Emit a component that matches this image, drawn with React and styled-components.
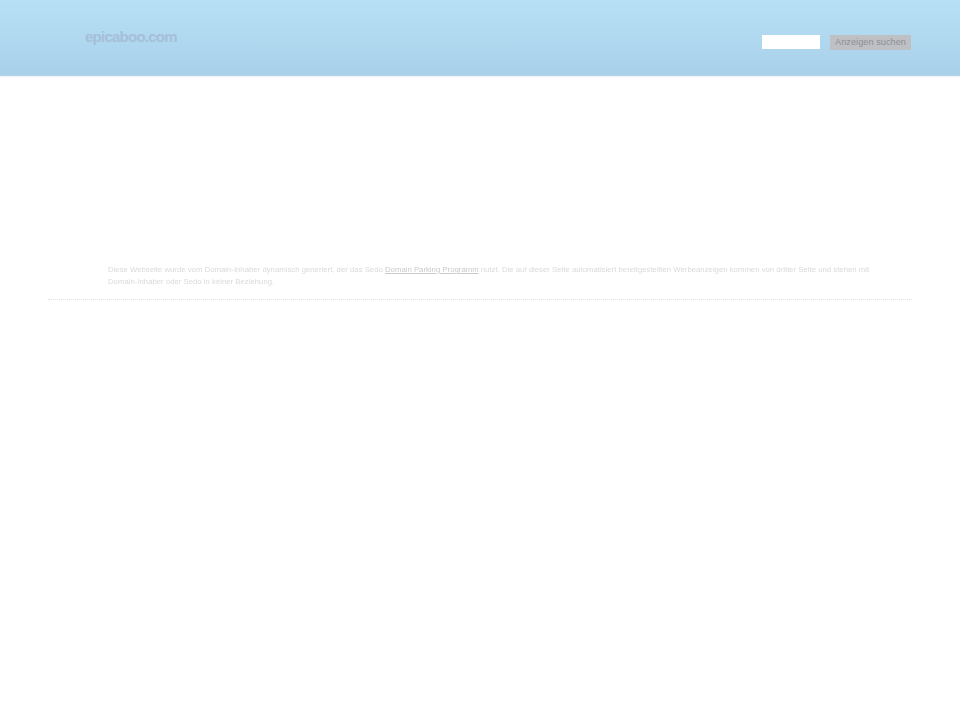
import React from 'react';
import styled, { createGlobalStyle } from 'styled-components';

const Global = createGlobalStyle`
  html, body { margin: 0; padding: 0; background: #fff; }
  body { font-family: "Liberation Sans", Arial, sans-serif; }
`;
const Header = styled.header`
  height: 75px;
  border-bottom: 1px solid #b5d2e6;
  background: linear-gradient(#b7e0f6, #a9d0e9);
  display: flex;
  justify-content: space-between;
  padding: 0 49px 0 85px;
  box-shadow: 0 1px 1px #eef4f8;
`;
const Logo = styled.div`
  font-size: 15px;
  font-weight: bold;
  letter-spacing: -0.75px;
  color: #a6bfd8;
  line-height: 18px;
  margin-top: 28px;
`;
const Search = styled.form`
  display: flex;
  gap: 10px;
  align-items: flex-start;
  margin-top: 35px;
`;
const Input = styled.div`
  width: 58px;
  height: 14px;
  background: #fff;
`;
const Button = styled.div`
  width: 81px;
  height: 15px;
  background: #bfc0c4;
  color: #8c8f96;
  font-size: 9.2px;
  letter-spacing: 0.03px;
  line-height: 14px;
  text-align: center;
`;
const Notice = styled.section`
  margin: 188px 48px 0;
  padding: 0 30px 11px 60px;
  border-bottom: 1px dotted #e0e0e0;
  font-size: 7.78px;
  line-height: 12px;
  color: #dadada;
  will-change: transform;
`;
const Para = styled.p`
  margin: 0;
`;
const Link = styled.a`
  color: #cacaca;
  text-decoration: underline;
`;

export default function App() {
  return (
    <>
      <Global />
      <Header>
        <Logo>epicaboo.com</Logo>
        <Search>
          <Input />
          <Button>Anzeigen suchen</Button>
        </Search>
      </Header>
      <Notice>
        <Para>
          Diese Webseite wurde vom Domain-Inhaber dynamisch generiert, der das Sedo <Link>Domain Parking Programm</Link> nutzt. Die auf dieser Seite automatisiert bereitgestellten Werbeanzeigen kommen von dritter Seite und stehen mit Domain-Inhaber oder Sedo in keiner Beziehung.
        </Para>
      </Notice>
    </>
  );
}
